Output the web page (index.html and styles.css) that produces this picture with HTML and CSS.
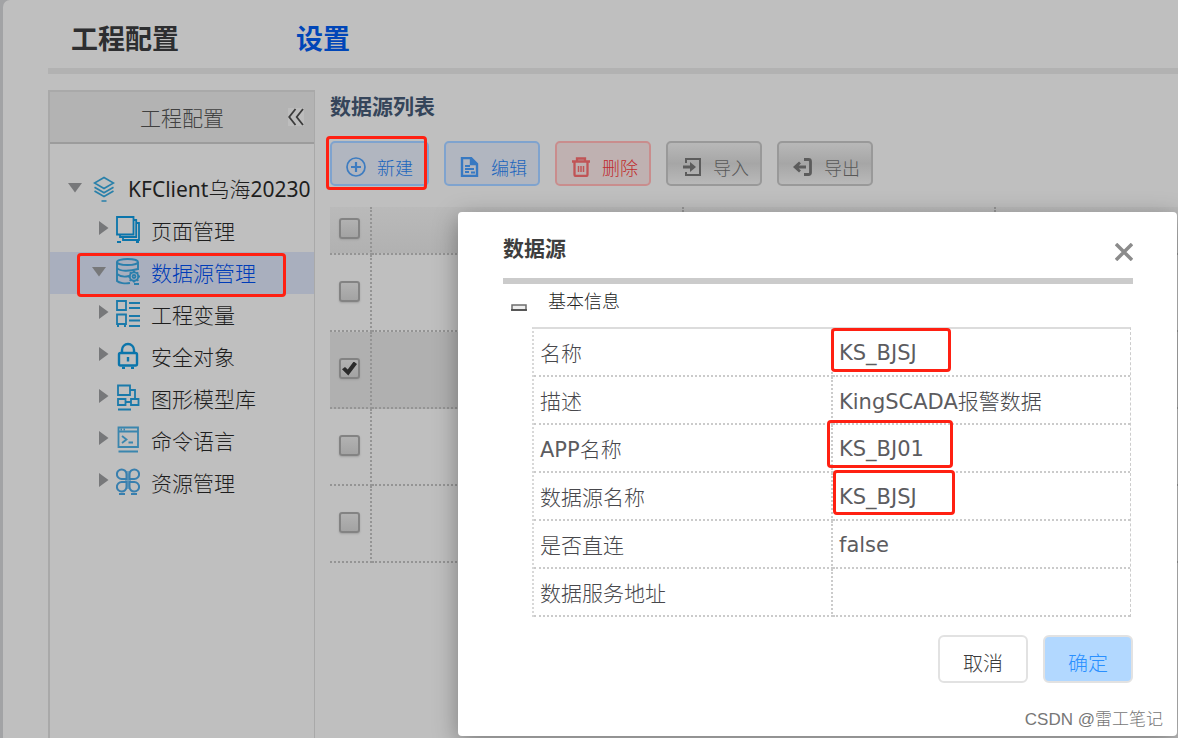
FILE: index.html
```html
<!DOCTYPE html>
<html lang="zh-CN">
<head>
<meta charset="utf-8">
<title>工程配置</title>
<link rel="stylesheet" href="styles.css">
</head>
<body>
<div class="page">
  <nav class="tabs">
    <a class="tab" href="#project">工程配置</a>
    <a class="tab tab-active" href="#settings">设置</a>
  </nav>
  <div class="columns">
    <aside class="sidebar">
      <header class="sidebar-head">
        <span>工程配置</span>
        <button class="collapse" type="button" aria-label="收起">
          <svg width="16" height="18" viewBox="0 0 16 18" fill="none" stroke="#3c3c3c" stroke-width="1.8"><path d="M7.500 1 1.200 9l6.300 8M15 1 8.700 9l6.300 8"/></svg>
        </button>
      </header>
      <ul class="tree">
        <li class="node root">
          <svg class="arrow" width="14" height="10" viewBox="0 0 14 10"><path d="M0 0h14L7 9.500z" fill="#77787a"/></svg>
          <svg class="icon" width="22" height="26" viewBox="0 0 22 26" fill="none" stroke="#2980aa" stroke-width="1.700"><path d="M11 1.500 20.500 7 11 12.500 1.500 7z"/><path d="M1.500 11.200 11 16.700l9.500-5.500M1.500 15 11 20.500 20.500 15M8.500 25h5"/></svg>
          <span>KFClient<span class="cjk">乌海</span>20230</span>
        </li>
        <li class="node">
          <svg class="arrow" width="10" height="14" viewBox="0 0 10 14"><path d="M0 0v14L9.500 7z" fill="#77787a"/></svg>
          <svg class="icon" width="24" height="27" viewBox="0 0 24 27" fill="none" stroke="#0b75ab" stroke-width="1.800"><path d="M1 1h16.500v17.500H1z"/><path d="M18 4h2.200v17H4v-2M20.500 7H23v17H7v-3M1 26h4M20 26h3"/></svg>
          <span class="cjk">页面管理</span>
        </li>
        <li class="node selected">
          <svg class="arrow" width="14" height="10" viewBox="0 0 14 10"><path d="M0 0h14L7 9.500z" fill="#77787a"/></svg>
          <svg class="icon" width="24" height="27" viewBox="0 0 24 27" fill="none" stroke="#2b7fac" stroke-width="1.900"><ellipse cx="11.500" cy="4" rx="10.500" ry="3"/><path d="M1 4v19c2 2 8 3 13 2M22 4v8M1 10c3 3.500 12 3.500 21 1M1 16c3 2.500 8 3 12 2"/><circle cx="18" cy="18.500" r="4.200"/><circle cx="18" cy="18.500" r="1.500"/><path d="M18 12.500v2M18 22.500v2M12 18.500h2M22 18.500h2M13.800 14.300l1.300 1.300M21 21.500l1.300 1.300M22.200 14.300l-1.300 1.300M15 21.500l-1.300 1.300M18 26h5"/></svg>
          <span class="cjk">数据源管理</span>
          <i class="mark mark-node"></i>
        </li>
        <li class="node">
          <svg class="arrow" width="10" height="14" viewBox="0 0 10 14"><path d="M0 0v14L9.500 7z" fill="#77787a"/></svg>
          <svg class="icon" width="24" height="27" viewBox="0 0 24 27" fill="none" stroke="#1b7aaa" stroke-width="1.800"><path d="M1 1h9v9H1zM1 14.500h9V24H1zM13 3h11M13 8h11M13 16h11M13 20.500h11M13 26h11M1 26h2M8 26h2"/></svg>
          <span class="cjk">工程变量</span>
        </li>
        <li class="node">
          <svg class="arrow" width="10" height="14" viewBox="0 0 10 14"><path d="M0 0v14L9.500 7z" fill="#77787a"/></svg>
          <svg class="icon" width="24" height="27" viewBox="0 0 24 27" fill="none" stroke="#0b75ab" stroke-width="2.400"><rect x="3" y="11" width="18" height="12.500" rx="1.500"/><path d="M6 11V8a6 6 0 0 1 12 0v3M12 15v4.500M6 26h3M15 26h3"/></svg>
          <span class="cjk">安全对象</span>
        </li>
        <li class="node">
          <svg class="arrow" width="10" height="14" viewBox="0 0 10 14"><path d="M0 0v14L9.500 7z" fill="#77787a"/></svg>
          <svg class="icon" width="24" height="27" viewBox="0 0 24 27" fill="none" stroke="#1b7aaa" stroke-width="1.800"><path d="M2 1.500h12V11H2zM14 6h5v8.500M2 15h7.500v6H2zM15 15h7.500v6H15zM9.500 18H15M2 25.500h13"/></svg>
          <span class="cjk">图形模型库</span>
        </li>
        <li class="node">
          <svg class="arrow" width="10" height="14" viewBox="0 0 10 14"><path d="M0 0v14L9.500 7z" fill="#77787a"/></svg>
          <svg class="icon" width="24" height="27" viewBox="0 0 24 27" fill="none" stroke="#3a86ae" stroke-width="1.800"><path d="M2.500 1.500H22v19.500H2.500zM2.500 5.500H22M6 10l4.500 3.500L6 17M12.500 16.500H17M2.500 25.500H22"/><path d="M4.500 3.500h5" stroke-dasharray="1.500 1.500"/></svg>
          <span class="cjk">命令语言</span>
        </li>
        <li class="node">
          <svg class="arrow" width="10" height="14" viewBox="0 0 10 14"><path d="M0 0v14L9.500 7z" fill="#77787a"/></svg>
          <svg class="icon" width="24" height="27" viewBox="0 0 24 27" fill="none" stroke="#387fae" stroke-width="2"><path d="M12 3v18M9 12.500h6" stroke="#6f9db9" stroke-width="4"/><path d="M10.500 11H5.800A4.800 4.800 0 1 1 10.500 6.200zM13.500 11h4.700a4.800 4.800 0 1 0-4.700-4.800zM10.500 14H5.800a4.800 4.800 0 1 0 4.700 4.800zM13.500 14h4.700a4.800 4.800 0 1 1-4.700 4.800zM3 26h6M15 26h6"/></svg>
          <span class="cjk">资源管理</span>
        </li>
      </ul>
    </aside>
    <main class="main">
      <h2 class="title">数据源列表</h2>
      <div class="toolbar">
        <button class="tool tool-new" type="button">
          <svg width="20" height="20" viewBox="0 0 20 20" fill="none" stroke="#3e7cc0" stroke-width="1.700"><circle cx="10" cy="10" r="9"/><path d="M10 5v10M5 10h10" stroke-width="2.200"/></svg>
          <span>新建</span>
          <i class="mark mark-new"></i>
        </button>
        <button class="tool" type="button">
          <svg width="20" height="20" viewBox="0 0 20 20" fill="none" stroke="#3779c2" stroke-width="2.400"><path d="M2 1h9l6 6v12H2z"/><path d="M11 1v6h6" fill="#3779c2"/><path d="M5 9h5M5 12h9M5 15h4M11 15.500h4" stroke-width="1.800"/></svg>
          <span>编辑</span>
        </button>
        <button class="tool tool-delete" type="button">
          <svg width="20" height="20" viewBox="0 0 20 20" fill="none" stroke="#c05456" stroke-width="2.300"><path d="M1 4.500h18M6 4V1.500h8V4M3.500 5v12.500q0 1.500 1.500 1.500h10q1.500 0 1.500-1.500V5"/><path d="M7.500 9v6M10 9v6M12.500 9v6" stroke-width="1.500"/></svg>
          <span>删除</span>
        </button>
        <button class="tool tool-plain" type="button">
          <svg width="20" height="20" viewBox="0 0 20 20" fill="none" stroke="#5c5c5c" stroke-width="2"><path d="M4 6V2h14v16H4v-3"/><path d="M1 10h10" stroke-width="3"/><path d="M8 5l6 5-6 5z" fill="#5c5c5c" stroke="none"/></svg>
          <span>导入</span>
        </button>
        <button class="tool tool-plain" type="button">
          <svg width="20" height="20" viewBox="0 0 20 20" fill="none" stroke="#5c5c5c" stroke-width="2.800"><path d="M11 2.500h4.500q2 0 2 2v11q0 2-2 2H11"/><path d="M2 10h11M7 5.500 2 10l5 4.500"/></svg>
          <span>导出</span>
        </button>
      </div>
      <table class="list">
        <colgroup><col class="col-check"><col class="col-data"><col class="col-data"><col></colgroup>
        <thead><tr><th><input type="checkbox" aria-label="全选"></th><th></th><th></th><th></th></tr></thead>
        <tbody>
          <tr><td><input type="checkbox" aria-label="第1行"></td><td></td><td></td><td></td></tr>
          <tr class="picked"><td><input type="checkbox" aria-label="第2行" checked></td><td></td><td></td><td></td></tr>
          <tr><td><input type="checkbox" aria-label="第3行"></td><td></td><td></td><td></td></tr>
          <tr><td><input type="checkbox" aria-label="第4行"></td><td></td><td></td><td></td></tr>
        </tbody>
      </table>
    </main>
  </div>
</div>

<section class="dialog" role="dialog" aria-labelledby="dialog-title">
  <header class="dialog-head">
    <h2 id="dialog-title">数据源</h2>
    <button class="close" type="button" aria-label="关闭">
      <svg width="18" height="18" viewBox="0 0 18 18" fill="none" stroke="#8b8b8b" stroke-width="3.500"><path d="M1 1l16 16M17 1 1 17"/></svg>
    </button>
  </header>
  <div class="group">
    <button class="fold" type="button" aria-label="折叠">
      <svg width="16" height="7" viewBox="0 0 16 7"><path d="M1 1h14v5H1z" fill="#eee" stroke="#6e6e6e" stroke-width="1.500"/><path d="M0 6h16" stroke="#444" stroke-width="1.500"/></svg>
    </button>
    <h3>基本信息</h3>
  </div>
  <table class="props">
    <tbody>
      <tr><th scope="row"><span class="cjk">名称</span></th><td>KS_BJSJ<i class="mark mark-name"></i></td></tr>
      <tr><th scope="row"><span class="cjk">描述</span></th><td>KingSCADA<span class="cjk">报警数据</span></td></tr>
      <tr><th scope="row">APP<span class="cjk">名称</span></th><td>KS_BJ01<i class="mark mark-app"></i></td></tr>
      <tr><th scope="row"><span class="cjk">数据源名称</span></th><td>KS_BJSJ<i class="mark mark-source"></i></td></tr>
      <tr><th scope="row"><span class="cjk">是否直连</span></th><td>false</td></tr>
      <tr><th scope="row"><span class="cjk">数据服务地址</span></th><td></td></tr>
    </tbody>
  </table>
  <footer class="actions">
    <button class="action" type="button">取消</button>
    <button class="action action-ok" type="button">确定</button>
  </footer>
  <p class="watermark">CSDN @雷工笔记</p>
</section>
</body>
</html>
```

FILE: styles.css
```css
* { box-sizing: border-box; }
body {
  margin: 0;
  min-height: 100vh;
  overflow: hidden;
  background: #a2a3a5;
  color: #2b2b2b;
  font-family: "Noto Sans", "Noto Sans CJK SC", sans-serif;
  font-size: 21px;
}
h2, h3, p, ul { margin: 0; padding: 0; }
button { font: inherit; padding: 0; border: 0; background: none; cursor: pointer; }
svg { display: block; flex: none; }
.cjk { font-weight: 300; }

.page {
  display: flex;
  flex-direction: column;
  min-height: 100vh;
  margin-left: 3px;
  padding-left: 45px;
  border-radius: 7px 0 0 0;
  background: #bfbfbf;
}
.tabs {
  display: flex;
  align-items: center;
  gap: 117px;
  height: 74px;
  padding: 0 0 0 23px;
  border-bottom: 6px solid #b2b2b2;
}
.tab {
  padding-top: 10px;
  color: #2d2e30;
  font-size: 27px;
  font-weight: 700;
  line-height: 36px;
  text-decoration: none;
}
.tab-active { color: #0046b8; }
.columns { display: flex; flex: 1; padding-top: 16px; }

.sidebar {
  flex: none;
  width: 267px;
  border: 2px solid #a9a9a9;
  border-right-width: 1px;
  border-bottom: 0;
}
.sidebar-head {
  position: relative;
  display: flex;
  align-items: center;
  justify-content: center;
  height: 52px;
  border-bottom: 2px solid #9c9c9c;
  background: #b3b3b3;
  color: #404040;
  font-weight: 300;
}
.collapse { position: absolute; right: 10px; top: 16px; background: #bdbdbd; }
.tree { padding-top: 24px; list-style: none; }
.node {
  position: relative;
  display: flex;
  align-items: center;
  height: 42px;
  padding-left: 49px;
  overflow: hidden;
  color: #1e1e1e;
  white-space: nowrap;
}
.node > span { padding-bottom: 2px; }
.node .arrow { margin: 0 7px 6px 0; }
.node .icon { margin: 0 11px 4px 0; }
.root { padding-left: 18px; }
.root .arrow { margin: 0 11px 2px 0; }
.root .icon { margin: 0 13px 0 0; }
.selected {
  padding-left: 42px;
  overflow: visible;
  background: #a9afbe;
  color: #003cb8;
}
.selected .arrow { margin: 0 10px 2px 0; }

.mark {
  position: absolute;
  border: 3px solid #ff2012;
  border-radius: 4px;
  pointer-events: none;
}
.mark-node { inset: 1px 28px -3px 27px; }
.mark-new { inset: -7px 0 -6px -6px; }
.mark-name { top: -1px; left: -2px; width: 120px; height: 44px; }
.mark-app { top: -5px; left: -6px; width: 126px; height: 48px; }
.mark-source { top: -3px; left: 0; width: 122px; height: 45px; }

.main { flex: 1; min-width: 0; padding-left: 15px; }
.title { color: #35455a; font-size: 21px; line-height: 32px; }
.toolbar { display: flex; gap: 15px; margin: 19px 0 21px; }
.tool {
  position: relative;
  display: flex;
  align-items: center;
  gap: 11px;
  width: 96px;
  height: 45px;
  padding: 6px 0 0 14px;
  border: 2px solid #7fa3ce;
  border-radius: 5px;
  background: #b1b6c0;
  color: #1c65bd;
  font-size: 18px;
  font-weight: 300;
}
.tool-new { width: 99px; }
.tool-delete { border-color: #c98d8d; background: #bfb1b1; color: #c02c2e; }
.tool-plain {
  border-color: #999;
  background: linear-gradient(#b8b8b8, #a6a6a6 50%, #b9b9b9);
  color: #585858;
}

.list {
  width: 100%;
  table-layout: fixed;
  border-spacing: 0;
}
.col-check { width: 42px; }
.col-data { width: 312px; }
.list th, .list td {
  height: 77px;
  padding: 0 0 2px;
  border-right: 2px dotted #949494;
  border-bottom: 2px dotted #949494;
  text-align: left;
  vertical-align: middle;
}
.list th { height: 48px; padding-bottom: 4px; background: linear-gradient(#bababa, #b1b1b1); }
.list th:last-child, .list td:last-child { border-right: 0; }
.picked { background: #b0b0b0; }
.list input {
  display: grid;
  place-items: center;
  width: 21px;
  height: 21px;
  margin: 0 0 0 9px;
  appearance: none;
  border: 2px solid #838383;
  border-radius: 3px;
  background: linear-gradient(#b2b2b2, #a3a3a3);
  box-shadow: 0 1px 2px #a0a0a0;
}
.list input:checked::before {
  content: "";
  width: 15px;
  height: 14px;
  background: #2b2b2b;
  clip-path: polygon(0 55%, 20% 40%, 38% 58%, 78% 0, 100% 18%, 42% 100%);
}

.dialog {
  position: absolute;
  top: 212px;
  right: 1px;
  width: 719px;
  padding: 0 44px 2px 45px;
  border-radius: 4px;
  background: #fff;
  box-shadow: 0 6px 24px rgba(0, 0, 0, 0.35);
  color: #5c5c60;
}
.dialog-head {
  display: flex;
  align-items: center;
  justify-content: space-between;
  height: 72px;
  padding-top: 6px;
  border-bottom: 6px solid #cbcbcb;
}
.dialog-head h2 { color: #3e3e3e; font-size: 21px; line-height: 30px; }
.close { padding-top: 8px; }
.group { display: flex; align-items: center; height: 43px; gap: 21px; padding: 0 0 10px 8px; }
.group h3 { color: #222; font-size: 18px; font-weight: 300; line-height: 26px; }
.fold { padding-top: 14px; }
.props {
  width: calc(100% - 31px);
  margin-left: 29px;
  table-layout: fixed;
  border-spacing: 0;
  border: 2px dotted #d8d8d8;
  border-top: 2px solid #dcdcdc;
  border-right: 1px dashed #ccc;
  border-bottom: 0;
  font-family: "DejaVu Sans", "Noto Sans CJK SC", sans-serif;
  font-size: 21px;
}
.props th, .props td {
  position: relative;
  height: 48px;
  padding: 2px 6px 0;
  border-bottom: 2px dotted #cbcbcb;
  font-weight: 400;
  line-height: 30px;
  text-align: left;
}
.props .cjk { color: #48484c; font-family: "Noto Sans CJK SC", sans-serif; font-weight: 300; }
.props th { width: 299px; border-right: 2px dotted #cbcbcb; }
.actions { display: flex; justify-content: flex-end; gap: 15px; padding-top: 18px; }
.action {
  width: 90px;
  height: 48px;
  padding-top: 10px;
  border: 2px solid #e2e2e2;
  border-radius: 6px;
  background: #fff;
  color: #3c3c3c;
  font-size: 20px;
  font-weight: 300;
  line-height: 28px;
}
.action-ok { background: #b2d8ff; color: #2a90ff; }
.watermark {
  margin: 23px -30px 0 0;
  color: #777;
  font-family: "Liberation Sans", "Noto Sans CJK SC", sans-serif;
  font-size: 17px;
  font-weight: 300;
  line-height: 28px;
  text-align: right;
}
```
